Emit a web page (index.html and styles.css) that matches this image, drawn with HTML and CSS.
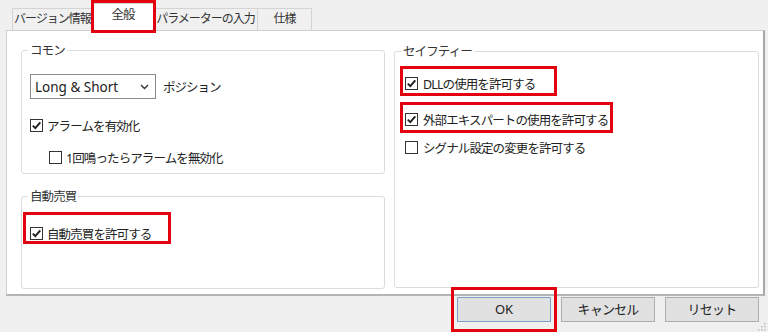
FILE: index.html
```html
<!DOCTYPE html>
<html lang="ja">
<head>
<meta charset="utf-8">
<link rel="stylesheet" href="styles.css">
</head>
<body>
<div class="dialog">
  <div class="tabs">
    <div class="tab t1">バージョン情報</div>
    <div class="tab t2 active hl hl-tab">全般</div>
    <div class="tab t3">パラメーターの入力</div>
    <div class="tab t4">仕様</div>
  </div>
  <div class="panel">
    <div class="col-left">
      <div class="group g-common">
        <div class="gtitle">コモン</div>
        <div class="select-row">
          <div class="select">
            <span class="select-text">Long &amp; Short</span>
            <svg class="chev" width="9" height="6" viewBox="0 0 9 6"><polyline points="1,1 4.5,4.5 8,1" fill="none" stroke="#333" stroke-width="1.4"/></svg>
          </div>
          <span class="select-label">ポジション</span>
        </div>
        <div class="cb-row r-alarm">
          <span class="cb checked"><svg width="11" height="11" viewBox="0 0 11 11"><path d="M1.8 5.6 L4.3 8.2 L9.3 2.4" fill="none" stroke="#1e1e1e" stroke-width="1.9"/></svg></span>
          <span class="lbl">アラームを有効化</span>
        </div>
        <div class="cb-row r-once">
          <span class="cb"></span>
          <span class="lbl">1回鳴ったらアラームを無効化</span>
        </div>
      </div>
      <div class="group g-auto">
        <div class="gtitle">自動売買</div>
        <div class="cb-row r-auto hl hl-auto">
          <span class="cb checked"><svg width="11" height="11" viewBox="0 0 11 11"><path d="M1.8 5.6 L4.3 8.2 L9.3 2.4" fill="none" stroke="#1e1e1e" stroke-width="1.9"/></svg></span>
          <span class="lbl">自動売買を許可する</span>
        </div>
      </div>
    </div>
    <div class="col-right">
      <div class="group g-safety">
        <div class="gtitle">セイフティー</div>
        <div class="cb-row r-dll hl hl-dll">
          <span class="cb checked"><svg width="11" height="11" viewBox="0 0 11 11"><path d="M1.8 5.6 L4.3 8.2 L9.3 2.4" fill="none" stroke="#1e1e1e" stroke-width="1.9"/></svg></span>
          <span class="lbl">DLLの使用を許可する</span>
        </div>
        <div class="cb-row r-ea hl hl-ea">
          <span class="cb checked"><svg width="11" height="11" viewBox="0 0 11 11"><path d="M1.8 5.6 L4.3 8.2 L9.3 2.4" fill="none" stroke="#1e1e1e" stroke-width="1.9"/></svg></span>
          <span class="lbl">外部エキスパートの使用を許可する</span>
        </div>
        <div class="cb-row r-signal">
          <span class="cb"></span>
          <span class="lbl">シグナル設定の変更を許可する</span>
        </div>
      </div>
    </div>
  </div>
  <div class="buttons">
    <div class="btn default hl hl-ok">OK</div>
    <div class="btn">キャンセル</div>
    <div class="btn">リセット</div>
    <svg class="grip" width="8" height="8" viewBox="0 0 8 8">
      <rect x="6" y="0" width="1.5" height="1.5" fill="#bbb"/>
      <rect x="3" y="3" width="1.5" height="1.5" fill="#bbb"/>
      <rect x="6" y="3" width="1.5" height="1.5" fill="#bbb"/>
      <rect x="0" y="6" width="1.5" height="1.5" fill="#bbb"/>
      <rect x="3" y="6" width="1.5" height="1.5" fill="#bbb"/>
      <rect x="6" y="6" width="1.5" height="1.5" fill="#bbb"/>
    </svg>
  </div>
</div>
</body>
</html>
```

FILE: styles.css
```css
*, *::before, *::after { box-sizing: border-box; }
html, body {
  margin: 0;
  padding: 0;
  background: #f0f0f0;
}
body {
  width: 768px;
  height: 332px;
  overflow: hidden;
  font-family: "Noto Sans", "Noto Sans CJK JP", sans-serif;
  font-size: 12.5px;
  color: #222;
}
.dialog {
  width: 768px;
  height: 332px;
  padding-left: 6px;
}

/* tabs */
.tabs {
  display: flex;
  align-items: flex-end;
  height: 30px;
  padding-left: 6px;
}
.tab {
  height: 22px;
  border: 1px solid #d4d4d4;
  border-bottom: none;
  background: #f0f0f0;
  color: #333;
  font-size: 12px;
  letter-spacing: -1px;
  line-height: 20px;
  text-align: center;
  white-space: nowrap;
}
.tab + .tab { border-left: none; }
.t1 { width: 81px; }
.t2 { width: 64px; }
.t3 { width: 105px; }
.t4 { width: 54px; }
.tab.active {
  height: 28px;
  margin: 0 -2px -1px -2px;
  background: #fff;
  border-left: 1px solid #d4d4d4;
  line-height: 22px;
  font-size: 12.5px;
  position: relative;
  z-index: 2;
}
.tab.active + .tab { border-left: 1px solid #d4d4d4; }

/* panel */
.panel {
  width: 759px;
  height: 266px;
  background: #fff;
  border: 1px solid #cfcfcf;
  border-right: 2px solid #a8a8a8;
  border-bottom: 2px solid #b4b4b4;
  padding: 19px 4px 0 14px;
  display: flex;
  gap: 9px;
}
.col-left {
  width: 364px;
  display: flex;
  flex-direction: column;
  gap: 22px;
}
.col-right {
  width: 365px;
  padding-top: 1px;
}
.group {
  border: 1px solid #dcdcdc;
  border-radius: 3px;
  padding: 0 0 0 8px;
}
.g-common { height: 124px; }
.g-auto { height: 93px; }
.g-safety { height: 237px; padding-left: 10px; }
.gtitle {
  width: fit-content;
  margin: -8px 0 0 -2px;
  padding: 0 2px;
  background: #fff;
  line-height: 15px;
  height: 15px;
  letter-spacing: -0.9px;
  color: #333;
}
.g-safety .gtitle { margin-left: -4px; }

/* select */
.select-row {
  display: flex;
  align-items: center;
  margin-top: 16px;
  height: 25px;
}
.select {
  width: 126px;
  height: 25px;
  border: 1px solid #8a8a8a;
  display: flex;
  align-items: center;
  justify-content: space-between;
  padding: 0 6px 0 4px;
}
.select-text {
  font-size: 13.5px;
  letter-spacing: 0;
  color: #222;
}
.select-label {
  margin-left: 7px;
  letter-spacing: -1px;
}

/* checkbox rows */
.cb-row {
  display: flex;
  align-items: center;
  gap: 4px;
  height: 16px;
  width: fit-content;
  position: relative;
}
.cb {
  width: 13px;
  height: 13px;
  border: 1px solid #333;
  background: #fff;
  display: flex;
  align-items: center;
  justify-content: center;
  flex: none;
}
.lbl {
  letter-spacing: -0.9px;
  white-space: nowrap;
}
.r-alarm { margin-top: 18px; }
.r-once { margin-top: 16px; margin-left: 19px; }
.r-auto { margin-top: 21px; }
.r-dll { margin-top: 16px; gap: 5px; }
.r-ea { margin-top: 20px; gap: 5px; }
.r-signal { margin-top: 12px; gap: 5px; }

/* buttons */
.buttons {
  display: flex;
  justify-content: flex-end;
  gap: 10px;
  margin-top: 1px;
  padding-right: 9px;
  position: relative;
}
.btn {
  width: 94px;
  height: 25px;
  background: #e1e1e1;
  border: 1px solid #adadad;
  text-align: center;
  line-height: 23px;
  font-size: 13px;
  letter-spacing: -0.8px;
  color: #222;
  position: relative;
}
.btn.default {
  border-color: #7f9fca;
  letter-spacing: 0;
}
.grip {
  position: absolute;
  right: 2px;
  top: 26px;
}

/* red annotation boxes */
.hl { position: relative; }
.hl::after {
  content: "";
  position: absolute;
  border: 3px solid #e3000f;
  pointer-events: none;
  z-index: 5;
}
.hl-tab::after { left: -1px; top: -4px; width: 65px; height: 33px; }
.hl-auto::after { left: -7px; top: -13px; width: 148px; height: 32px; }
.hl-dll::after { left: -5px; top: -9px; width: 157px; height: 30px; }
.hl-ea::after { left: -5px; top: -9px; width: 213px; height: 31px; }
.hl-ok::after { left: -7px; top: -11px; width: 106px; height: 45px; }
```
